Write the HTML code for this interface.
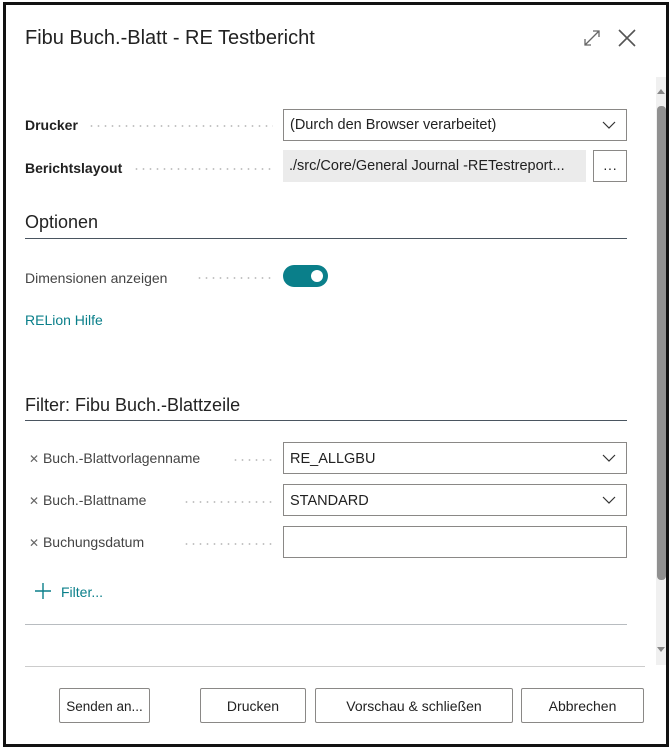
<!DOCTYPE html>
<html><head><meta charset="utf-8"><style>
*{margin:0;padding:0;box-sizing:border-box}
body{width:670px;height:750px;background:#fff;font-family:"Liberation Sans",sans-serif;position:relative;overflow:hidden;color:#212121}
.a{position:absolute}
.frame{left:3px;top:2px;width:666px;height:745px;border:3px solid #111;border-right-width:3px}
.t{font-size:14px;line-height:18px;white-space:nowrap}
.lab{color:#212121}
.dots{height:2px;background-image:radial-gradient(circle,#c4c4c4 0.8px,transparent 1px);background-size:7px 2px}
.box{border:1px solid #8a8886;background:#fff;height:32px}
.chev{position:absolute;right:10px;top:10px}
.btn{border:1px solid #8a8886;border-radius:2px;height:35px;top:688px;font-size:14px;line-height:35px;text-align:center;color:#222;white-space:nowrap}
</style></head><body>
<div class="a frame"></div>
<div class="a" style="left:25px;top:25px;font-size:20px;line-height:26px;color:#222">Fibu Buch.-Blatt - RE Testbericht</div>
<svg class="a" style="left:582px;top:28px" width="20" height="20" viewBox="0 0 20 20"><path d="M3 17L17 3M11 3h6v6M3 11v6h6" stroke="#666" stroke-width="1.3" fill="none"/></svg>
<svg class="a" style="left:617px;top:28px" width="20" height="20" viewBox="0 0 20 20"><path d="M2 2L18 18M18 2L2 18" stroke="#555" stroke-width="1.6" fill="none"/></svg>

<div class="a" style="left:656px;top:77px;width:10px;height:588px;background:#f0f0f0"></div>
<svg class="a" style="left:656px;top:87px" width="10" height="8"><path d="M1 7L5 2L9 7Z" fill="#888"/></svg>
<div class="a" style="left:657px;top:106px;width:9px;height:474px;background:#909090;border-radius:4px"></div>
<svg class="a" style="left:656px;top:646px" width="10" height="8"><path d="M1 1L5 6L9 1Z" fill="#888"/></svg>

<div class="a t lab" style="left:25px;top:116px;font-weight:bold">Drucker</div>
<div class="a dots" style="left:88px;top:125px;width:185px"></div>
<div class="a box" style="left:283px;top:109px;width:344px"><div class="t" style="position:absolute;left:6px;top:6px;font-size:14.5px">(Durch den Browser verarbeitet)</div><svg class="chev" width="14" height="10"><path d="M1 2L7 8L13 2" stroke="#333" stroke-width="1.2" fill="none"/></svg></div>

<div class="a t lab" style="left:25px;top:159px;font-weight:bold">Berichtslayout</div>
<div class="a dots" style="left:133px;top:168px;width:140px"></div>
<div class="a" style="left:283px;top:150px;width:303px;height:32px;background:#ebebeb"><div class="t" style="position:absolute;left:6px;top:7px;font-size:14.5px">./src/Core/General Journal -RETestreport...</div></div>
<div class="a box" style="left:593px;top:150px;width:34px;font-size:14px;text-align:center;line-height:34px">···</div>

<div class="a" style="left:25px;top:211px;font-size:18px;line-height:22px;color:#222">Optionen</div>
<div class="a" style="left:25px;top:238px;width:602px;height:1px;background:#4a5560"></div>
<div class="a t" style="left:25px;top:269px;color:#444">Dimensionen anzeigen</div>
<div class="a dots" style="left:196px;top:277px;width:77px"></div>
<div class="a" style="left:283px;top:265px;width:45px;height:22px;border-radius:11px;background:#0a7f8a"><div style="position:absolute;right:5px;top:5px;width:12px;height:12px;border-radius:6px;background:#fff"></div></div>
<div class="a t" style="left:25px;top:311px;color:#0a7f8a">RELion Hilfe</div>

<div class="a" style="left:25px;top:394px;font-size:18px;line-height:22px;color:#222">Filter: Fibu Buch.-Blattzeile</div>
<div class="a" style="left:25px;top:420px;width:602px;height:1px;background:#4a5560"></div>

<div class="a t" style="left:29px;top:449px;color:#444"><span style="font-size:12px;color:#666">✕</span> Buch.-Blattvorlagenname</div>
<div class="a dots" style="left:232px;top:459px;width:41px"></div>
<div class="a box" style="left:283px;top:442px;width:344px"><div class="t" style="position:absolute;left:6px;top:7px;font-size:14.5px">RE_ALLGBU</div><svg class="chev" width="14" height="10"><path d="M1 2L7 8L13 2" stroke="#333" stroke-width="1.2" fill="none"/></svg></div>

<div class="a t" style="left:29px;top:491px;color:#444"><span style="font-size:12px;color:#666">✕</span> Buch.-Blattname</div>
<div class="a dots" style="left:183px;top:501px;width:90px"></div>
<div class="a box" style="left:283px;top:484px;width:344px"><div class="t" style="position:absolute;left:6px;top:7px;font-size:14.5px">STANDARD</div><svg class="chev" width="14" height="10"><path d="M1 2L7 8L13 2" stroke="#333" stroke-width="1.2" fill="none"/></svg></div>

<div class="a t" style="left:29px;top:533px;color:#444"><span style="font-size:12px;color:#666">✕</span> Buchungsdatum</div>
<div class="a dots" style="left:183px;top:543px;width:90px"></div>
<div class="a box" style="left:283px;top:526px;width:344px"></div>

<svg class="a" style="left:34px;top:582px" width="18" height="18"><path d="M9 1V17M1 9H17" stroke="#0a7f8a" stroke-width="1.4"/></svg>
<div class="a t" style="left:61px;top:583px;color:#0a7f8a">Filter...</div>
<div class="a" style="left:25px;top:624px;width:602px;height:1px;background:#b8bcc0"></div>
<div class="a" style="left:25px;top:666px;width:620px;height:1px;background:#ccc"></div>

<div class="a btn" style="left:59px;width:91px;font-size:13.5px">Senden an...</div>
<div class="a btn" style="left:200px;width:106px">Drucken</div>
<div class="a btn" style="left:315px;width:198px">Vorschau &amp; schließen</div>
<div class="a btn" style="left:521px;width:123px">Abbrechen</div>
</body></html>
